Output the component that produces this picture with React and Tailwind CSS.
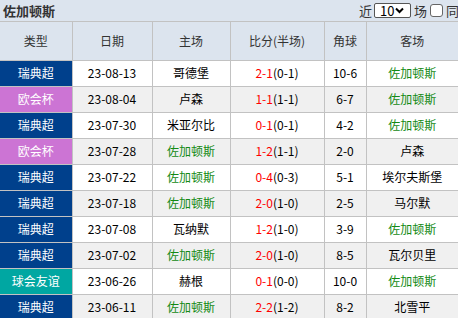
import React from 'react';

const TYPE_BG = {
  瑞典超: 'bg-[#00408c]',
  欧会杯: 'bg-[#cc74d4]',
  球会友谊: 'bg-[#00a7a2]',
};

const ROWS = [
  { type: '瑞典超', date: '23-08-13', home: '哥德堡', score: '2-1', half: '(0-1)', corner: '10-6', away: '佐加顿斯' },
  { type: '欧会杯', date: '23-08-04', home: '卢森', score: '1-1', half: '(1-1)', corner: '6-7', away: '佐加顿斯' },
  { type: '瑞典超', date: '23-07-30', home: '米亚尔比', score: '0-1', half: '(0-1)', corner: '4-2', away: '佐加顿斯' },
  { type: '欧会杯', date: '23-07-28', home: '佐加顿斯', score: '1-2', half: '(1-1)', corner: '2-0', away: '卢森' },
  { type: '瑞典超', date: '23-07-22', home: '佐加顿斯', score: '0-4', half: '(0-3)', corner: '5-1', away: '埃尔夫斯堡' },
  { type: '瑞典超', date: '23-07-18', home: '佐加顿斯', score: '2-0', half: '(1-0)', corner: '2-5', away: '马尔默' },
  { type: '瑞典超', date: '23-07-08', home: '瓦纳默', score: '1-2', half: '(1-0)', corner: '3-9', away: '佐加顿斯' },
  { type: '瑞典超', date: '23-07-02', home: '佐加顿斯', score: '2-0', half: '(1-0)', corner: '8-5', away: '瓦尔贝里' },
  { type: '球会友谊', date: '23-06-26', home: '赫根', score: '0-1', half: '(0-0)', corner: '10-0', away: '佐加顿斯' },
  { type: '瑞典超', date: '23-06-11', home: '佐加顿斯', score: '2-2', half: '(1-2)', corner: '8-2', away: '北雪平' },
];

const TEAM = '佐加顿斯';

const teamCls = (name) => (name === TEAM ? 'text-[#138a13]' : 'text-black');

const App = () => {
  return (
    <div className="w-[458px] h-[318px] overflow-hidden bg-white text-[12px] font-['Noto_Sans_CJK_SC','Noto_Sans',sans-serif]">
      {/* title bar */}
      <div className="h-[22px] flex items-center justify-between bg-[#dce4ee] border-b border-[#c2c2c2] pl-[3px]">
        <span className="font-bold text-[13px] text-[#333] leading-none">佐加顿斯</span>
        <div className="flex items-center text-[13px] text-[#333] leading-none whitespace-nowrap mr-[-14px]">
          <span>近</span>
          <div className="ml-[2px] w-[37px] h-[15px] border border-[#555] rounded-[2px] bg-white flex items-center pl-[5px] text-[13px] text-black">
            10
            <svg width="9" height="7" viewBox="0 0 9 7" className="ml-[1px]">
              <path d="M1 1.5 L4.5 5 L8 1.5" stroke="#000" strokeWidth="2" fill="none" />
            </svg>
          </div>
          <span className="ml-[3px]">场</span>
          <span className="ml-[3px] w-[13px] h-[13px] border border-[#666] rounded-[3px] bg-white" />
          <span className="ml-[3px]">同场</span>
        </div>
      </div>

      <table className="table-fixed border-collapse w-[458px]">
        <colgroup>
          <col className="w-[72px]" />
          <col className="w-[80px]" />
          <col className="w-[78px]" />
          <col className="w-[94px]" />
          <col className="w-[42px]" />
          <col className="w-[92px]" />
        </colgroup>
        <thead>
          <tr className="h-[38px] bg-[#dce4ee]">
            {['类型', '日期', '主场', '比分(半场)', '角球', '客场'].map((h) => (
              <th key={h} className="border border-[#c2c2c2] border-t-0 first:border-l-0 last:border-r-0 font-normal text-[12px] text-[#333] text-center p-0">
                {h}
              </th>
            ))}
          </tr>
        </thead>
        <tbody>
          {ROWS.map((r, i) => (
            <tr key={i} className={`h-[26px] ${i % 2 ? 'bg-[#f0f0f0]' : 'bg-white'}`}>
              <td className={`border border-[#c2c2c2] border-l-0 text-center text-white p-0 ${TYPE_BG[r.type]}`}>{r.type}</td>
              <td className="border border-[#c2c2c2] text-center text-black p-0">{r.date}</td>
              <td className={`border border-[#c2c2c2] text-center p-0 ${teamCls(r.home)}`}>{r.home}</td>
              <td className="border border-[#c2c2c2] text-center text-black p-0">
                <span className="text-[#ff0000]">{r.score}</span>
                {r.half}
              </td>
              <td className="border border-[#c2c2c2] text-center text-black p-0">{r.corner}</td>
              <td className={`border border-[#c2c2c2] border-r-0 text-center p-0 ${teamCls(r.away)}`}>{r.away}</td>
            </tr>
          ))}
        </tbody>
      </table>
    </div>
  );
};

export default App;
